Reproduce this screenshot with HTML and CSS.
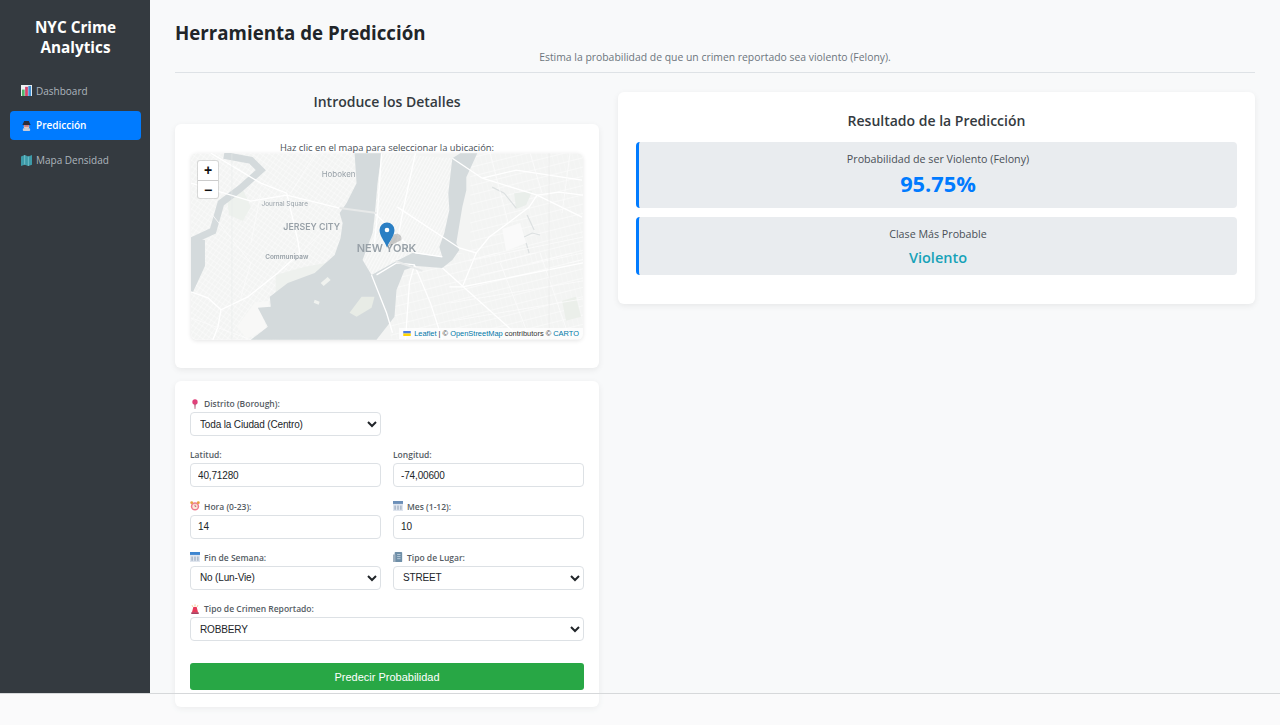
FILE: index.html
```html
<!DOCTYPE html>
<html lang="es">
<head>
    <meta charset="UTF-8">
    <meta name="viewport" content="width=device-width, initial-scale=1.0">
    <title>NYC Crime Analytics</title>
    <link rel="stylesheet" href="styles.css">
</head>
<body>
    <div class="app">
        <aside class="sidebar">
            <h2 class="brand">NYC Crime Analytics</h2>
            <nav class="nav">
                <a class="nav-link" href="#">
                    <svg class="emoji" viewBox="0 0 12 12"><rect x="0" y="0" width="12" height="12" fill="#eef2f4"/><rect x="1" y="5" width="3" height="7" fill="#4fb36a"/><rect x="4.500" y="2" width="3" height="10" fill="#d8436b"/><rect x="8" y="1" width="3" height="11" fill="#3f8fd2"/></svg>
                    Dashboard
                </a>
                <a class="nav-link active" href="#">
                    <svg class="emoji" viewBox="0 0 12 12"><circle cx="6" cy="7" r="3" fill="#e9c7b5"/><path d="M1.500 5.500h9L8.500 1h-5z" fill="#2d2d3a"/><rect x="2" y="9" width="8" height="3" rx="1" fill="#c8ccd8"/><rect x="3.500" y="6" width="5" height="1" fill="#b03050"/></svg>
                    Predicción
                </a>
                <a class="nav-link" href="#">
                    <svg class="emoji" viewBox="0 0 12 12"><path d="M0 1.500l4-1.500 4 1.500L12 0v10.500L8 12l-4-1.500L0 12z" fill="#3d9aa8"/><path d="M4 0v10.500M8 1.500V12" stroke="#8fd0d8" stroke-width=".7"/></svg>
                    Mapa Densidad
                </a>
            </nav>
        </aside>

        <main class="main">
            <header class="page-head">
                <h1>Herramienta de Predicción</h1>
                <p>Estima la probabilidad de que un crimen reportado sea violento (Felony).</p>
            </header>

            <div class="columns">
                <section class="col-left">
                    <h3 class="col-title">Introduce los Detalles</h3>

                    <div class="card map-card">
                        <p class="map-hint">Haz clic en el mapa para seleccionar la ubicación:</p>
                        <div class="map">
                            <svg class="map-tiles" viewBox="0 0 393 187">
                                <defs>
                                    <pattern id="gridA" width="7" height="3" patternUnits="userSpaceOnUse" patternTransform="rotate(-62)">
                                        <path d="M0 0H7" stroke="#fff" stroke-width="1"/>
                                        <path d="M0 0V3" stroke="#fbfbfb" stroke-width=".5"/>
                                    </pattern>
                                    <pattern id="gridB" width="5" height="9" patternUnits="userSpaceOnUse" patternTransform="rotate(-14)">
                                        <path d="M0 0H5" stroke="#fff" stroke-width=".9"/>
                                        <path d="M0 0V9" stroke="#fafafa" stroke-width=".5"/>
                                    </pattern>
                                    <pattern id="gridC" width="4" height="5" patternUnits="userSpaceOnUse" patternTransform="rotate(35)">
                                        <path d="M0 0H4M0 0V5" stroke="#fff" stroke-width=".7"/>
                                    </pattern>
                                </defs>
                                <rect width="393" height="187" fill="#f3f4f3"/>
                                <rect x="200" y="100" width="193" height="87" fill="url(#gridB)"/>
                                <rect x="280" width="113" height="110" fill="url(#gridB)"/>
                                <rect width="165" height="187" fill="url(#gridC)"/>
                                <path d="M191 0L262 5 258 40 259 57 254 80 249 94 252 104 222 100 206 110 181 122 172 107 182 80 184 64 187 30z" fill="url(#gridA)"/>

                                <!-- parks and light areas -->
                                <path d="M36 42l16-6 8 18-8 14-14-6z" fill="#edf1ed"/>
                                <path d="M85 122l28-8 22-4 6-8-14 20-28 8-14 14z" fill="#eef1ee"/>
                                <path d="M324 40l18-2-6 14-10 4z" fill="#e9eeea"/>
                                <path d="M372 148l14-4 5 20-15 4z" fill="#ebefea"/>
                                <path d="M312 76l18-6 6 20-20 8z" fill="#fafafa"/>
                                <path d="M64 150l14-2 0 8-8 2 6 18-20 10-10-12z" fill="#f8f8f7"/>

                                <!-- water -->
                                <path d="M164 0L191 0 187 30 184 64 182 80 172 107 181 122 206 108 222 100 252 104 249 94 254 80 259 57 258 40 262 5 270 0 287 0 276 24 276 37 272 54 266 90 269 97 262 107 252 115 226 113 214 117 206 137 204 164 186 187 60 187 77 174 67 155 80 154 79 144 97 130 124 120 144 102 150 85 152 70 149 60 156 50 166 30z" fill="#d4dadc"/>
                                <path d="M0 85L14 87 14 113 2 139 0 139z" fill="#d4dadc"/>
                                <path d="M33 2L60 7 70 17 50 35 30 50 22 78 0 88" fill="none" stroke="#d4dadc" stroke-width="7"/>
                                <path d="M302 34L314 40 326 55M337 62L344 77M334 84L342 80 350 82M336 90L339 100" fill="none" stroke="#dce0e1" stroke-width="1.200"/>

                                <!-- islands -->
                                <path d="M159 160L171 144 184 144 181 155 166 164z" fill="#e8ece6"/>
                                <path d="M130 130L137 124 140 127 133 133zM124 147L129 149 128 152 123 150z" fill="#f0f2ef"/>

                                <!-- main roads -->
                                <g class="roads">
                                    <path d="M0 139L17 145 30 157 57 144 87 120 109 100 107 87 96 40 70 30 20 0"/>
                                    <path d="M30 157L27 174 22 187"/>
                                    <path d="M0 30L60 48 96 42 149 55"/>
                                    <path d="M207 54L269 95 286 100 299 84 322 67 339 54 347 42 392 64"/>
                                    <path d="M286 100L272 134 259 134"/>
                                    <path d="M292 25L347 42 369 39 393 42"/>
                                    <path d="M292 25L326 17 392 27"/>
                                    <path d="M262 5L292 25"/>
                                    <path d="M186 122L206 110 224 112 240 150 252 187"/>
                                    <path d="M181 122L196 160 202 180"/>
                                    <path d="M224 112L219 130 215 187"/>
                                    <path d="M191 0L187 60 184 90"/>
                                    <path d="M225 0L212 60 205 100"/>
                                    <path d="M184 60L225 100 252 104"/>
                                    <path d="M272 134L393 110"/>
                                    <path d="M252 115L330 185"/>
                                </g>
                                <g class="roads-minor">
                                    <path d="M278 108L393 84M290 122L393 100M260 150L393 128M262 168L393 146"/>
                                    <path d="M300 0L318 70M340 0L352 40M380 0L372 60M310 110L340 187M350 100L380 187"/>
                                    <path d="M20 60L60 110 50 144M70 40L60 90M125 0L100 40M0 165L60 187M130 80L100 110"/>
                                </g>
                                <path d="M186 60L149 55" stroke="#e7e9e9" stroke-width="2"/>
                                <path d="M205 108L232 118" stroke="#e9ebeb" stroke-width="2"/>
                                <path d="M41 0V187M359 0V187" fill="none" stroke="#e6e8e8" stroke-width=".5"/>

                                <g class="map-label">
                                    <text x="148" y="24" font-size="8">Hoboken</text>
                                    <text x="94" y="53" font-size="6.500">Journal Square</text>
                                    <text x="121" y="77" font-size="8.800" font-weight="600">JERSEY CITY</text>
                                    <text x="196" y="99" font-size="11" font-weight="600">NEW YORK</text>
                                    <text x="96" y="106.500" font-size="6.500" font-weight="600">Communipaw</text>
                                </g>
                                <path d="M197 94L211 87C212 81 206 79 203 82z" fill="#555" opacity=".3"/>
                                <path d="M196.500 94.500C194 88 189 83 189 77a7.500 7.500 0 0 1 15 0c0 6-5 11-7.500 17.500z" fill="#2a7fc4"/>
                                <circle cx="196.500" cy="77" r="2.300" fill="#fff"/>
                            </svg>
                            <div class="zoom-ctl">
                                <span>+</span>
                                <span>−</span>
                            </div>
                            <div class="attribution">
                                <svg class="flag" viewBox="0 0 12 8"><rect width="12" height="4" fill="#4c7be1"/><rect y="4" width="12" height="4" fill="#ffd500"/></svg>
                                <a href="#">Leaflet</a> | © <a href="#">OpenStreetMap</a> contributors © <a href="#">CARTO</a>
                            </div>
                        </div>
                    </div>

                    <form class="card form-card">
                        <div class="form-row">
                            <div class="form-group">
                                <label for="borough"><svg class="emoji" viewBox="0 0 12 12"><circle cx="6" cy="3.500" r="3.200" fill="#e0407a"/><path d="M5.300 6h1.400l-.3 6h-.8z" fill="#a04060"/></svg>Distrito (Borough):</label>
                                <select id="borough"><option>Toda la Ciudad (Centro)</option></select>
                            </div>
                            <div class="form-group"></div>
                        </div>
                        <div class="form-row">
                            <div class="form-group">
                                <label for="lat">Latitud:</label>
                                <input id="lat" type="text" value="40,71280">
                            </div>
                            <div class="form-group">
                                <label for="lon">Longitud:</label>
                                <input id="lon" type="text" value="-74,00600">
                            </div>
                        </div>
                        <div class="form-row">
                            <div class="form-group">
                                <label for="hora"><svg class="emoji" viewBox="0 0 12 12"><circle cx="6" cy="6.500" r="5" fill="#ee7b8e"/><circle cx="6" cy="6.500" r="3.200" fill="#fbe8d8"/><path d="M6 4.500v2h1.500" stroke="#b03050" stroke-width=".8" fill="none"/><circle cx="2" cy="2" r="1.700" fill="#e8a040"/><circle cx="10" cy="2" r="1.700" fill="#e8a040"/></svg>Hora (0-23):</label>
                                <input id="hora" type="text" value="14">
                            </div>
                            <div class="form-group">
                                <label for="mes"><svg class="emoji" viewBox="0 0 12 12"><rect x="0" y="3" width="12" height="9" fill="#dfe5ee"/><rect x="0" y="0" width="12" height="3.500" fill="#6c8fb8"/><path d="M2.500 5.500v5M6 5.500v5M9.500 5.500v5" stroke="#7d90a8"/></svg>Mes (1-12):</label>
                                <input id="mes" type="text" value="10">
                            </div>
                        </div>
                        <div class="form-row">
                            <div class="form-group">
                                <label for="finde"><svg class="emoji" viewBox="0 0 12 12"><rect x="0" y="3" width="12" height="9" fill="#dfe5ee"/><rect x="0" y="0" width="12" height="3.500" fill="#3d85d0"/><path d="M2.500 5.500v5M6 5.500v5M9.500 5.500v5" stroke="#7d90a8"/></svg>Fin de Semana:</label>
                                <select id="finde"><option>No (Lun-Vie)</option></select>
                            </div>
                            <div class="form-group">
                                <label for="lugar"><svg class="emoji" viewBox="0 0 12 12"><rect x="2" y="0" width="9" height="12" rx="1" fill="#6f8fa8"/><rect x="0" y="3" width="3" height="9" fill="#9fb0bf"/><path d="M5 3h4M5 5.500h4M5 8h4" stroke="#c5d5e2"/></svg>Tipo de Lugar:</label>
                                <select id="lugar"><option>STREET</option></select>
                            </div>
                        </div>
                        <div class="form-row">
                            <div class="form-group">
                                <label for="crimen"><svg class="emoji" viewBox="0 0 12 12"><path d="M4 3.500h4l1.800 7h-7.600z" fill="#e83a5a"/><rect x="1.500" y="10" width="9" height="2" fill="#a84060"/><path d="M6 .5v2.500M2.500 1.500l1 2M9.500 1.500l-1 2" stroke="#e8a040" stroke-width=".7"/></svg>Tipo de Crimen Reportado:</label>
                                <select id="crimen"><option>ROBBERY</option></select>
                            </div>
                        </div>
                        <button type="submit">Predecir Probabilidad</button>
                    </form>
                </section>

                <section class="col-right">
                    <div class="card result-card">
                        <h3 class="result-title">Resultado de la Predicción</h3>
                        <div class="result-box box-prob">
                            <p class="result-label">Probabilidad de ser Violento (Felony)</p>
                            <p class="result-prob">95.75%</p>
                        </div>
                        <div class="result-box box-class">
                            <p class="result-label">Clase Más Probable</p>
                            <p class="result-class">Violento</p>
                        </div>
                    </div>
                </section>
            </div>
        </main>
    </div>
    <div class="fold"></div>
</body>
</html>
```

FILE: styles.css
```css
* {
    box-sizing: border-box;
}
html, body {
    height: 725px;
    overflow: hidden;
}
body {
    margin: 0;
    font-family: "Open Sans", "Noto Sans", sans-serif;
    background-color: #f8f9fa;
    color: #212529;
    position: relative;
}
p, h1, h2, h3 {
    margin: 0;
}
.app {
    display: flex;
    height: 693px;
}

/* sidebar */
.sidebar {
    width: 150px;
    flex-shrink: 0;
    background-color: #343a40;
    padding: 17px 9px 0 10px;
}
.brand {
    font-size: 15.300px;
    line-height: 20px;
    font-weight: 700;
    text-align: center;
    color: #fff;
    padding: 0 20px;
    margin-bottom: 19px;
}
.nav {
    display: flex;
    flex-direction: column;
    gap: 5.750px;
}
.nav-link {
    display: flex;
    align-items: center;
    height: 29px;
    padding: 0 11px;
    border-radius: 4px;
    font-size: 10px;
    color: #adb5bd;
    text-decoration: none;
}
.nav-link .emoji {
    margin-right: 4px;
    width: 11px;
    height: 11px;
}
.nav-link.active {
    background-color: #007bff;
    color: #fff;
    font-weight: 600;
}
.emoji {
    width: 10px;
    height: 10px;
    flex-shrink: 0;
}

/* main */
.main {
    flex: 1;
    padding: 19px 25px 0;
    min-width: 0;
}
.page-head {
    height: 54px;
    border-bottom: 1px solid #dee2e6;
    margin-bottom: 19px;
}
.page-head h1 {
    font-size: 18.700px;
    line-height: 28px;
    font-weight: 700;
}
.page-head p {
    margin-top: 2px;
    font-size: 10.400px;
    line-height: 16px;
    text-align: center;
    color: #6c757d;
}
.columns {
    display: flex;
    gap: 19px;
    align-items: flex-start;
}
.col-left {
    width: 424px;
    flex-shrink: 0;
}
.col-right {
    flex: 1;
}
.col-title {
    font-size: 14px;
    line-height: 20px;
    font-weight: 600;
    text-align: center;
    color: #343a40;
    margin-bottom: 12px;
}
.card {
    background-color: #fff;
    border-radius: 6px;
    box-shadow: 0 2px 6px rgba(0, 0, 0, 0.07);
}

/* map */
.map-card {
    height: 244px;
    padding: 18px 16px 0;
    margin-bottom: 13px;
}
.map-hint {
    font-size: 9.400px;
    line-height: 11px;
    text-align: center;
    color: #495057;
}
.map {
    position: relative;
    height: 187px;
    border-radius: 6px;
    overflow: hidden;
    box-shadow: 0 1px 4px rgba(0, 0, 0, 0.1);
}
.map-tiles {
    display: block;
    width: 100%;
    height: 100%;
    filter: blur(0.35px);
}
.roads path {
    fill: none;
    stroke: #fff;
    stroke-width: 1.300;
}
.roads-minor path {
    fill: none;
    stroke: #fbfbfb;
    stroke-width: 0.800;
}
.map-label text {
    font-family: "Inter", "Open Sans", sans-serif;
    fill: #98a1a8;
    text-anchor: middle;
}
.zoom-ctl {
    position: absolute;
    top: 8px;
    left: 7px;
    width: 20px;
    background-color: #fff;
    border-radius: 2px;
    box-shadow: 0 0 0 1px rgba(0, 0, 0, 0.12);
}
.zoom-ctl span {
    display: block;
    height: 18.500px;
    font: 700 14px/18px "Liberation Sans", Arial, sans-serif;
    text-align: center;
    color: #111;
}
.zoom-ctl span + span {
    border-top: 1px solid #ccc;
}
.attribution {
    position: absolute;
    right: 0;
    bottom: 1px;
    padding: 0 4px;
    background-color: rgba(255, 255, 255, 0.7);
    font: 7.450px/11px "Liberation Sans", Arial, sans-serif;
    color: #333;
}
.attribution a {
    color: #0078a8;
    text-decoration: none;
}
.flag {
    width: 8px;
    height: 5px;
    margin-right: 1px;
}

/* form */
.form-card {
    height: 326px;
    padding: 16.500px 15px 0 15px;
}
.form-row {
    display: flex;
    gap: 12px;
    margin-bottom: 12.750px;
}
.form-group {
    flex: 1;
    min-width: 0;
}
label {
    display: flex;
    align-items: center;
    gap: 4px;
    height: 12px;
    margin-bottom: 2.500px;
    font-size: 8.500px;
    font-weight: 600;
    color: #555c63;
}
input, select {
    display: block;
    width: 100%;
    height: 24px;
    border: 1px solid #dde1e5;
    border-radius: 4px;
    background-color: #fff;
    font: 10px "Liberation Sans", Arial, sans-serif;
    letter-spacing: -0.150px;
    color: #212529;
}
input {
    padding: 0 7px;
}
select {
    padding: 0 5px;
}
button {
    display: block;
    width: 100%;
    height: 27px;
    margin-top: 22px;
    border: none;
    border-radius: 3px;
    background-color: #28a745;
    color: #fff;
    font: 11px "Liberation Sans", Arial, sans-serif;
    cursor: pointer;
}

/* result */
.result-card {
    height: 212px;
    padding: 19px 18px 0;
}
.result-title {
    font-size: 14px;
    line-height: 20px;
    font-weight: 600;
    text-align: center;
    color: #343a40;
    margin-bottom: 11px;
}
.result-box {
    border-left: 3px solid #007bff;
    border-radius: 4px;
    background-color: #e9ecef;
    text-align: center;
    margin-bottom: 9px;
    padding-top: 10px;
}
.box-prob {
    height: 66px;
}
.box-class {
    height: 58px;
}
.result-label {
    font-size: 10.700px;
    line-height: 15px;
    color: #495057;
}
.result-prob {
    margin-top: 3px;
    font-size: 21.800px;
    line-height: 28px;
    font-weight: 700;
    color: #007bff;
}
.result-class {
    margin-top: 6px;
    font-size: 14.500px;
    line-height: 20px;
    font-weight: 600;
    color: #17a2b8;
}

/* line where the original capture ended */
.fold {
    position: absolute;
    top: 693px;
    left: 0;
    right: 0;
    bottom: 0;
    border-top: 1px solid #d6d8da;
    background-color: rgba(255, 255, 255, 0.25);
}
```
